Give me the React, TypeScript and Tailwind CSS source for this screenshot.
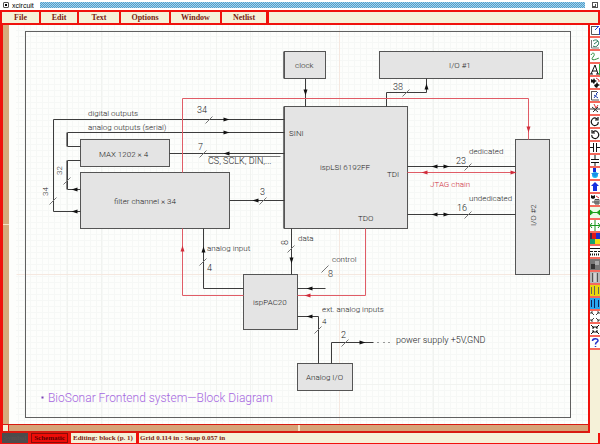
import { type JSX, type ReactNode } from "react";

type Point = [number, number];

type Block = {
  x: number;
  y: number;
  w: number;
  h: number;
};

type Label = {
  text: string;
  x: number;
  y: number;
  size?: number;
  rotate?: number;
  color?: string;
};

type Arrow = {
  x: number;
  y: number;
  dir: "left" | "right" | "up" | "down";
  color?: string;
};

const DARK = "#3c3c3c";
const RED = "#d02c3a";

const menus = ["File", "Edit", "Text", "Options", "Window", "Netlist"];
const menuWidths = ["w-[37px]", "w-[36px]", "w-[40px]", "w-[48px]", "w-[49px]", "w-[44px]"];

const blocks: Block[] = [
  { x: 284, y: 51, w: 41, h: 27 },
  { x: 379, y: 51, w: 163, h: 27 },
  { x: 284, y: 106, w: 123, h: 122 },
  { x: 80, y: 139, w: 89, h: 27 },
  { x: 80, y: 172, w: 149, h: 56 },
  { x: 243, y: 274, w: 54, h: 55 },
  { x: 515, y: 139, w: 34, h: 135 },
  { x: 297, y: 363, w: 55, h: 27 },
];

const wires: string[] = [
  "M305 78V106",
  "M386 106V92H426V78",
  "M284 119H53V211H80",
  "M284 132H67V146H80",
  "M80 160H67V189H80",
  "M169 153H284",
  "M229 200H284",
  "M407 166H515",
  "M407 214H515",
  "M203 228V288H243",
  "M297 288H325",
  "M291 228V274",
  "M297 316H318V363",
  "M331 363V342H373",
];

const redWires: string[] = [
  "M182 172V98H528V139",
  "M407 172H515",
  "M365 228V295H297",
  "M243 295H182V228",
];

// Middle of each bus tick
const ticks: Point[] = [
  [406, 92], [209, 119], [53, 200], [67, 180], [203, 153], [263, 200],
  [468, 166], [468, 214], [203, 261], [325, 268], [291, 248], [318, 329], [345, 342],
];

const arrows: Arrow[] = [
  { x: 305, y: 92, dir: "down" },
  { x: 426, y: 86, dir: "up" },
  { x: 226, y: 119, dir: "right" },
  { x: 226, y: 132, dir: "right" },
  { x: 74, y: 211, dir: "left" },
  { x: 74, y: 189, dir: "left" },
  { x: 226, y: 153, dir: "left" },
  { x: 255, y: 200, dir: "left" },
  { x: 434, y: 166, dir: "left" },
  { x: 446, y: 166, dir: "right" },
  { x: 434, y: 214, dir: "left" },
  { x: 446, y: 214, dir: "right" },
  { x: 203, y: 249, dir: "up" },
  { x: 309, y: 288, dir: "left" },
  { x: 291, y: 260, dir: "down" },
  { x: 309, y: 316, dir: "left" },
  { x: 362, y: 342, dir: "right" },
  { x: 528, y: 129, dir: "down", color: RED },
  { x: 424, y: 172, dir: "left", color: RED },
  { x: 513, y: 172, dir: "right", color: RED },
  { x: 307, y: 295, dir: "left", color: RED },
  { x: 182, y: 248, dir: "up", color: RED },
];

const labels: Label[] = [
  { text: "clock", x: 295, y: 68 },
  { text: "I/O #1", x: 449, y: 68 },
  { text: "38", x: 393, y: 90, size: 9 },
  { text: "digital outputs", x: 88, y: 116 },
  { text: "analog outputs (serial)", x: 88, y: 130 },
  { text: "34", x: 197, y: 113, size: 9 },
  { text: "SINI", x: 289, y: 136 },
  { text: "MAX 1202 × 4", x: 99, y: 157 },
  { text: "7", x: 198, y: 150, size: 9 },
  { text: "CS, SCLK, DIN,...", x: 208, y: 164, size: 9 },
  { text: "filter channel × 34", x: 114, y: 204 },
  { text: "3", x: 260, y: 195, size: 9 },
  { text: "32", x: 62, y: 175, rotate: -90 },
  { text: "34", x: 48, y: 196, rotate: -90 },
  { text: "ispLSI 6192FF", x: 320, y: 170 },
  { text: "TDI", x: 387, y: 177 },
  { text: "TDO", x: 358, y: 221 },
  { text: "dedicated", x: 469, y: 154 },
  { text: "23", x: 456, y: 164, size: 9 },
  { text: "JTAG chain", x: 430, y: 187, color: RED },
  { text: "undedicated", x: 469, y: 201 },
  { text: "16", x: 457, y: 211, size: 9 },
  { text: "I/O #2", x: 536, y: 226, rotate: -90 },
  { text: "analog input", x: 207, y: 251 },
  { text: "4", x: 207, y: 271, size: 9 },
  { text: "8", x: 288, y: 245, size: 9, rotate: -90 },
  { text: "data", x: 298, y: 241 },
  { text: "control", x: 332, y: 262 },
  { text: "8", x: 328, y: 277, size: 9 },
  { text: "ispPAC20", x: 253, y: 305 },
  { text: "ext. analog inputs", x: 322, y: 312 },
  { text: "4", x: 322, y: 324 },
  { text: "2", x: 341, y: 338, size: 9 },
  { text: "power supply +5V,GND", x: 396, y: 343, size: 9 },
  { text: "Analog I/O", x: 306, y: 380 },
  { text: "BioSonar Frontend system—Block Diagram", x: 48, y: 402, size: 12, color: "#a566e0" },
];

const arrowAngle = { right: 0, down: 90, left: 180, up: 270 };

function Schematic(): JSX.Element {
  return (
    <svg viewBox="9 25 579 399" className="block h-full w-full bg-[#fdfefc]" role="img" aria-label="Block diagram">
      <defs>
        <pattern id="grid" width="6" height="6" patternUnits="userSpaceOnUse">
          <path d="M0 .5H6M.5 0V6" stroke="#f6f8f6" fill="none" />
        </pattern>
      </defs>
      <rect x="16" y="25" width="572" height="399" fill="url(#grid)" />
      <g fill="none" transform="translate(.5 .5)">
        <path d="M67 25V424M101 25V424M216 25V424M250 25V424M433 25V424M16 384H588" stroke="#f1f3f0" />
        <path d="M16 274H588M339 25V424" stroke="#f5e8e0" />
        <rect x="25" y="31" width="545" height="386" stroke="#606060" />
        {blocks.map((b, i) => (
          <rect key={i} x={b.x} y={b.y} width={b.w} height={b.h} fill="#e4e4e4" stroke="#555" />
        ))}
        <path d="M283 51V78M283 106V228" stroke="#777" />
        {wires.map((d) => (
          <path key={d} d={d} stroke={DARK} />
        ))}
        <path d="M66 132V146M66 160V189" stroke="#888" />
        {redWires.map((d) => (
          <path key={d} d={d} stroke="#e05c66" />
        ))}
        <path d="M208 156H280" stroke="#777" />
        {ticks.map(([x, y]) => (
          <path key={`${x}-${y}`} d={`M${x - 4} ${y + 4}L${x + 3} ${y - 3}`} stroke="#777" />
        ))}
        {arrows.map((a, i) => (
          <path
            key={i}
            d="M-3 -2L3 0L-3 2Z"
            fill={a.color ?? "#111"}
            transform={`translate(${a.x} ${a.y}) rotate(${arrowAngle[a.dir]})`}
          />
        ))}
        <path d="M377 342h1M383 342h1M388 342h1" stroke={DARK} />
        <rect x="41" y="396" width="2" height="2" fill="#7a3fb5" />
      </g>
      <g className="font-['Roboto',sans-serif] font-light">
        {labels.map((l, i) => (
          <text
            key={i}
            x={l.x}
            y={l.y}
            fontSize={l.size ?? 8}
            fill={l.color ?? "#1c1c1c"}
            transform={l.rotate ? `rotate(${l.rotate} ${l.x} ${l.y})` : undefined}
          >
            {l.text}
          </text>
        ))}
      </g>
    </svg>
  );
}

const tools: { name: string; icon: ReactNode }[] = [
  { name: "Pan", icon: <><path d="M1 1.5H9M1.5 1V9.500H9" stroke="#555" /><path d="M9.500 3V10M5 5L9 1M6 1.500H9" stroke="#2340d0" /></> },
  { name: "Arc", icon: <><path d="M1.500 2V10H9" stroke="#777" /><path d="M3 3C7 0 10 4 8 7C7 9 4 9 3 8M4 6L8 3" stroke="#2c7a5a" /></> },
  { name: "Spline", icon: <path d="M1 4C3 0 6 3 3 6C0 10 5 9 9 7" stroke="#2c8a3a" /> },
  { name: "Text", icon: <><path d="M1 10L5 1L8 10M2 7H7M0 10H3M6 10H9" stroke="#111" /><path d="M9.500 0V11" stroke="#30b040" /></> },
  { name: "Copy", icon: <><path d="M1 2L3 3L4 1L5 3L7 4L5 5L4 7L2 5L1 6Z" fill="#111" /><path d="M4 8L6 7L7 5L8 7L10 8L8 9L7 11L5 10Z" fill="#111" /><path d="M6 1L9 3L9 5" stroke="#d33" /></> },
  { name: "Edit element", icon: <><path d="M1 1.500H7M1.500 1V10H9" stroke="#555" /><path d="M4 5L8 8M7 4L4 8M8 2L6 4" stroke="#2340b0" /></> },
  { name: "Delete", icon: <><path d="M0 6H10M2 4L8 9M8 4L3 9" stroke="#333" /><path d="M4 1L6 5M8 2L6 5" stroke="#d33" /></> },
  { name: "Rotate clockwise", icon: <path d="M7 3C3 0 0 5 2 8C4 11 9 9 8 6M8 1V4H5" stroke="#111" strokeWidth="1.200" /> },
  { name: "Rotate counterclockwise", icon: <path d="M3 3C7 0 10 5 8 8C6 11 1 9 2 6M2 1V4H5" stroke="#111" strokeWidth="1.200" /> },
  { name: "Flip horizontal", icon: <path d="M3.500 1V10M6.500 1V10M0 5.500H3M7 5.500H10" stroke="#111" /> },
  { name: "Flip vertical", icon: <path d="M1 4.500H9M1 7.500H9M5 0V4M5 8V11" stroke="#111" /> },
  { name: "Push into object", icon: <><path d="M3 0H6V4H3Z" fill="#1530d8" /><circle cx="5" cy="7" r="3" fill="#19b6f0" /><path d="M1 5H9L5 9Z" fill="#1a8de8" /></> },
  { name: "Pop out of object", icon: <path d="M5 1L9 5H7V10H3V5H1Z" fill="#1530e0" /> },
  { name: "Make object", icon: <><path d="M1 1L3 2L5 1L5 4L3 5L1 4Z" fill="#111" /><path d="M5 5.500H9V10H5ZM2 8H9M7 5V10" stroke="#444" /><path d="M6 2L9 4" stroke="#d33" /></> },
  { name: "Join", icon: <><rect width="10" height="11" fill="#eafbe6" /><path d="M0 3L3 5.500L0 8ZM10 3L7 5.500L10 8Z" fill="#18a018" stroke="#18a018" /><path d="M3 5.500H7" stroke="#18a018" /></> },
  { name: "Unjoin", icon: <path d="M5 0V11M0 5.500H10M2 3L0 5.500L2 8M8 3L10 5.500L8 8" stroke="#18951c" /> },
  { name: "Color", icon: <><rect width="3" height="6" fill="#3a2a50" /><rect x="2" width="4" height="6" fill="#e01818" /><rect x="6" width="4" height="6" fill="#1c30d0" /><rect y="6" width="5" height="5" fill="#18a070" /><rect x="5" y="6" width="5" height="5" fill="#f0e010" /></> },
  { name: "Border", icon: <><path d="M0 2.500H10" stroke="#111" /><path d="M0 5.500H10" stroke="#111" strokeDasharray="3 1" /><path d="M0 8.500H10" stroke="#111" strokeDasharray="1 1" strokeWidth="2" /></> },
  { name: "Fill", icon: <><rect width="10" height="11" fill="#777" /><rect x="1" y="5" width="4" height="5" fill="#333" /><rect x="5" y="2" width="4" height="4" fill="#aaa" /></> },
  { name: "Parameters", icon: <><rect width="10" height="11" fill="#b8b8b8" /><path d="M2.500 1V10M7.500 1V10" stroke="#555" /><path d="M5 1V10" stroke="#eee" /></> },
  { name: "Library", icon: <><rect width="10" height="11" fill="#e8d810" /><path d="M4.500 1V10M1.500 2V9M8.500 2V9" stroke="#665" /></> },
  { name: "Library directory", icon: <><rect width="10" height="11" fill="#28a8f0" /><path d="M4.500 1V10M1.500 2V9M8.500 2V9" stroke="#125" /></> },
  { name: "Zoom in", icon: <path d="M1 1L4 4M9 1L6 4M1 10L4 7M9 10L6 7M1 3V1H3M7 1H9V3M1 8V10H3M7 10H9V8" stroke="#444" /> },
  { name: "Zoom out", icon: <path d="M1 1L4 4V2M4 4H2M9 1L6 4V2M6 4H8M1 10L4 7V9M4 7H2M9 10L6 7V9M6 7H8" stroke="#111" /> },
  { name: "Help", icon: <path d="M2.500 4C2.500 1 8 1 8 3.500C8 5.500 5.500 5 5.500 7.500M5.500 9V10" stroke="#2430c8" strokeWidth="1.500" /> },
];

export default function App(): JSX.Element {
  return (
    <div className="flex h-screen flex-col bg-[#f0120c] font-['Liberation_Serif',serif] text-[7px] font-bold leading-none text-[#7a1c10]">
      <header className="flex h-[10px] shrink-0 items-center bg-white font-['Liberation_Sans',sans-serif] text-black">
        <button type="button" aria-label="Window menu" className="ml-[3px] flex size-[6px] items-center justify-center rounded-[1px] border border-neutral-600">
          <span className="size-[2px] bg-black" />
        </button>
        <h1 className="ml-[3px] w-[28px] text-[7px] font-normal">xcircuit</h1>
        <div className="h-[6px] flex-1 bg-[repeating-conic-gradient(#4f9fcc_0_25%,#a4d0ea_0_50%)] bg-[length:2px_2px]" />
        <button type="button" aria-label="Maximize" className="mr-[2px] ml-[7px] size-[6px] border border-neutral-600">
          <span className="block size-[3px] border-r border-b border-neutral-600" />
        </button>
      </header>

      <nav className="flex h-[15px] shrink-0 gap-[2px] border-2 border-[#f0120c] text-[8px]">
        {menus.map((menu, i) => (
          <button key={menu} type="button" className={`flex shrink-0 items-center justify-center bg-[#f5f1d8] ${menuWidths[i]}`}>
            {menu}
          </button>
        ))}
        <div className="ml-px flex-1 bg-[#f5f1d8]" />
      </nav>

      <div className="flex min-h-0 flex-1">
        <main className="flex min-w-0 flex-1 flex-col pl-[3px]">
          <div className="flex min-h-0 flex-1">
            <div className="flex w-[6px] shrink-0 flex-col justify-center bg-[#d6ab7c]">
              <div className="h-px bg-[#f5e3c4]" />
            </div>
            <div className="min-w-0 flex-1">
              <Schematic />
            </div>
          </div>
          <div className="flex h-[9px] shrink-0 gap-px border-t border-b-2 border-[#d81a10]">
            <button type="button" aria-label="Center view" className="w-[5px] bg-[#f5f1d8]" />
            <div className="flex flex-1 justify-center bg-[#d6a377]">
              <div className="w-[2px] bg-[#f5e3c4]" />
            </div>
          </div>
        </main>

        <aside className="ml-[2px] flex w-[10px] shrink-0 flex-col gap-[2px] bg-[#f6695c]">
          {tools.map((tool) => (
            <button key={tool.name} type="button" aria-label={tool.name} title={tool.name} className="h-[11px] shrink-0 bg-white">
              <svg viewBox="0 0 10 11" className="block h-full w-full" fill="none">
                {tool.icon}
              </svg>
            </button>
          ))}
          <div className="flex-1 bg-[#f5f1d8]" />
        </aside>
      </div>

      <footer className="flex h-[11px] shrink-0 gap-[3px] border-r-2 border-b border-l-2 border-[#f0120c]">
        <button type="button" className="w-[26px] bg-[#4c4c4c] text-[#5a5050]">Symbol</button>
        <button type="button" className="w-[37px] border border-[#8a0c08] bg-[#ee0c08] text-[#5c0000]">Schematic</button>
        <p className="flex w-[65px] items-center overflow-hidden bg-[#f5f1d8] pl-[2px] whitespace-nowrap">Editing: block (p. 1)</p>
        <p className="flex flex-1 items-center bg-[#f5f1d8] pl-px whitespace-nowrap">Grid 0.114 in : Snap 0.057 in</p>
      </footer>
    </div>
  );
}
